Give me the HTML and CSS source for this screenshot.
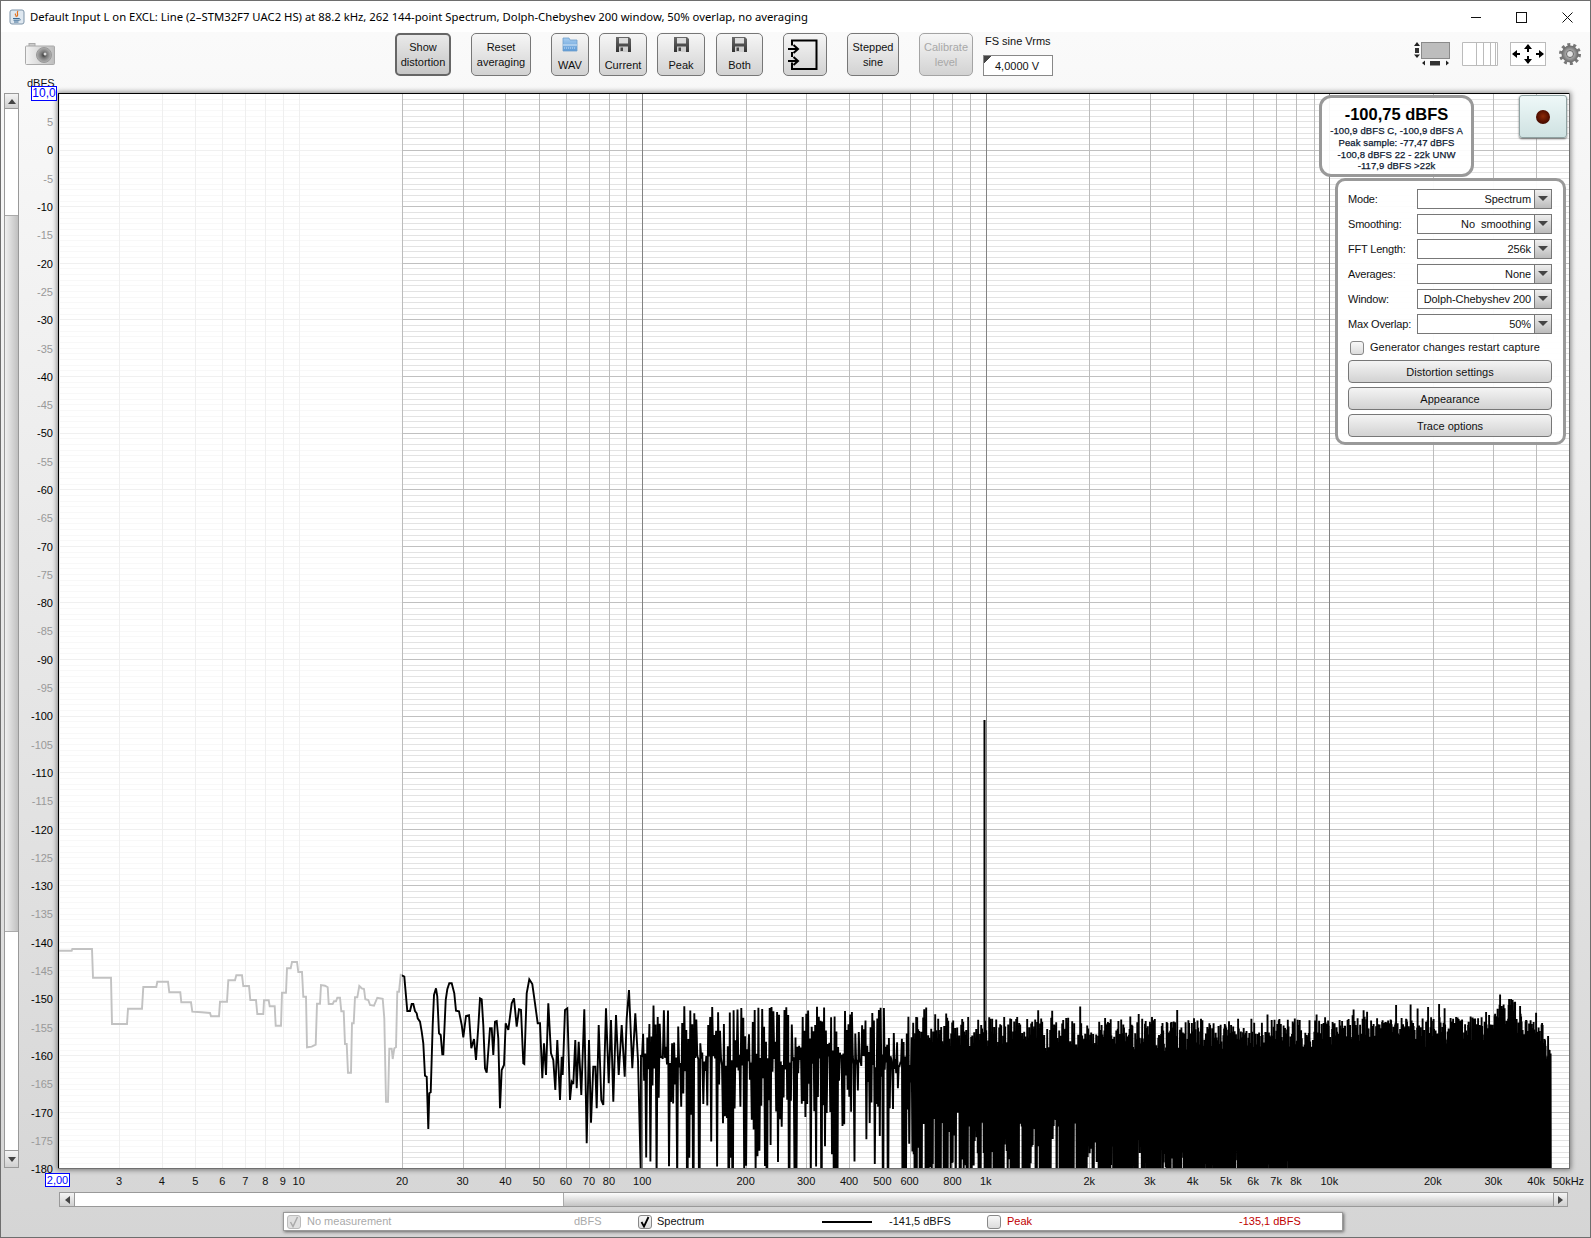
FILE: index.html
```html
<!DOCTYPE html>
<html lang="en">
<head>
<meta charset="utf-8">
<title>REW RTA</title>
<link rel="stylesheet" href="styles.css">
</head>
<body>
<svg class="defs" width="0" height="0" aria-hidden="true">
  <defs>
    <linearGradient id="flop" x1="0" y1="0" x2="0" y2="1"><stop offset="0" stop-color="#6a6a6a"/><stop offset="1" stop-color="#333"/></linearGradient>
    <symbol id="floppy" viewBox="0 0 15 15">
      <path d="M0 0H13L15 2V15H0Z" fill="url(#flop)"/>
      <rect x="3" y="1" width="9" height="5.500" fill="#dcdcdc"/>
      <rect x="3" y="9.500" width="9" height="5.500" fill="#cfcfcf"/>
      <rect x="4.500" y="10.500" width="2.500" height="3.500" fill="#444"/>
    </symbol>
  </defs>
</svg>
<div class="window">
  <header class="titlebar">
    <svg class="appicon" width="16" height="16" viewBox="0 0 16 16">
      <rect x="1" y="1" width="14" height="14" rx="2" fill="#dfe8f0" stroke="#7d93a8"/>
      <path d="M9 2C7 4 10 5 8 7.500M6.500 4.500C5.500 6 8 6.500 7 8" fill="none" stroke="#e2711d" stroke-width="1.200"/>
      <path d="M4 9.500H10.500M4.500 11.200H10M5 13H9.500" stroke="#3b6b94" fill="none"/>
      <path d="M10.500 9.500a1.300 1.300 0 0 1 0 2.200" stroke="#3b6b94" fill="none"/>
    </svg>
    <span class="title">Default Input L on EXCL: Line (2–STM32F7 UAC2 HS) at 88.2 kHz, 262 144-point Spectrum, Dolph-Chebyshev 200 window, 50% overlap, no averaging</span>
    <div class="winctl">
      <svg class="ctl" width="45" height="16" viewBox="0 0 45 16"><path d="M18 8.500H28" stroke="#111"/></svg>
      <svg class="ctl" width="45" height="16" viewBox="0 0 45 16"><rect x="17.500" y="3.500" width="10" height="10" fill="none" stroke="#111"/></svg>
      <svg width="45" height="16" viewBox="0 0 45 16"><path d="M17.500 3.500L27.500 13.500M27.500 3.500L17.500 13.500" stroke="#111" fill="none"/></svg>
    </div>
  </header>

  <div class="toolbar">
    <svg class="camera" width="30" height="22" viewBox="0 0 30 22">
      <defs>
        <linearGradient id="cam" x1="0" y1="0" x2="1" y2="0"><stop offset="0" stop-color="#f4f4f4"/><stop offset="1" stop-color="#bdbdbd"/></linearGradient>
        <radialGradient id="lens"><stop offset="0" stop-color="#333"/><stop offset=".4" stop-color="#777"/><stop offset="1" stop-color="#b4b4b4"/></radialGradient>
      </defs>
      <rect x="4" y="0.500" width="6" height="3" fill="#ccc" stroke="#aaa"/>
      <rect x="0.500" y="3" width="29" height="18.500" rx="1" fill="url(#cam)" stroke="#aaa"/>
      <circle cx="19" cy="12" r="7.500" fill="url(#lens)" stroke="#999"/>
      <circle cx="20" cy="11" r="1.500" fill="#ddd"/>
    </svg>
    <button class="btn btn-show">Show<br>distortion</button>
    <button class="btn btn-reset">Reset<br>averaging</button>
    <button class="btn btn-icon btn-wav">
      <svg width="16" height="15" viewBox="0 0 16 15">
        <defs><linearGradient id="fold" x1="0" y1="0" x2="0" y2="1"><stop offset="0" stop-color="#a7cdf0"/><stop offset="1" stop-color="#5d9ad6"/></linearGradient></defs>
        <path d="M1 1H7L8 3H15V14H1Z" fill="url(#fold)" stroke="#6f9fcc" stroke-width=".8"/>
        <path d="M1 8H15" stroke="#d7e8f8"/><path d="M2 11H14" stroke="#9ac2ea" stroke-dasharray="1 1" stroke-width="2"/>
      </svg>
      <span>WAV</span>
    </button>
    <button class="btn btn-icon btn-current"><svg width="15" height="15"><use href="#floppy"/></svg><span>Current</span></button>
    <button class="btn btn-icon btn-peak"><svg width="15" height="15"><use href="#floppy"/></svg><span>Peak</span></button>
    <button class="btn btn-icon btn-both"><svg width="15" height="15"><use href="#floppy"/></svg><span>Both</span></button>
    <button class="btn btn-import">
      <svg width="30" height="32" viewBox="0 0 30 32">
        <path d="M4 6.500V1.500H28.500V30H4V23.500M4 18V13" fill="none" stroke="#000" stroke-width="2"/>
        <path d="M0 10H9M5.500 6L10 10L5.500 14M0 22H9M5.500 18L10 22L5.500 26" fill="none" stroke="#000" stroke-width="2"/>
      </svg>
    </button>
    <button class="btn btn-stepped">Stepped<br>sine</button>
    <button class="btn btn-cal" disabled>Calibrate<br>level</button>
    <div class="fsgroup">
      <div class="fslabel">FS sine Vrms</div>
      <div class="fsinput">4,0000 V</div>
    </div>
    <div class="tools">
      <svg width="37" height="24" viewBox="0 0 37 24">
        <rect x="8.500" y="0.500" width="28" height="16" fill="#bdbdbd" stroke="#8a8a8a"/>
        <rect x="2" y="6" width="4" height="5" fill="#333"/>
        <path d="M4 0L7 4H1ZM4 16L7 12.500H1Z" fill="#222"/>
        <rect x="17" y="19" width="10" height="4.500" fill="#333"/>
        <path d="M9 21L12 18.500V23.500ZM36 21L33 18.500V23.500Z" fill="#222"/>
      </svg>
      <svg width="36" height="24" viewBox="0 0 36 24">
        <path d="M.5.500H35.500V23.500H.5ZM14.500.5V23.500M21.500.5V23.500M28.500.5V23.500M33.500.5V23.500" fill="#fff" stroke="#bbb"/>
      </svg>
      <svg width="36" height="24" viewBox="0 0 36 24">
        <rect x=".5" y=".5" width="35" height="23" fill="#fff" stroke="#bbb"/>
        <path d="M18 3V10M18 14V21M3 12H10M26 12H33" stroke="#000" stroke-width="2" fill="none"/>
        <path d="M18 2L22 7H14ZM18 22L22 17H14ZM2 12L7 8V16ZM34 12L29 8V16Z" fill="#000"/>
      </svg>
      <svg width="24" height="24" viewBox="0 0 24 24">
        <defs><radialGradient id="gear"><stop offset=".35" stop-color="#b8b8b8"/><stop offset="1" stop-color="#666"/></radialGradient></defs>
        <circle cx="12" cy="12" r="9.500" fill="none" stroke="#777" stroke-width="3" stroke-dasharray="2.985 2.985"/>
        <circle cx="12" cy="12" r="8.500" fill="url(#gear)"/>
        <circle cx="12" cy="12" r="3.500" fill="#e4e4e4" stroke="#666"/>
      </svg>
    </div>
  </div>

  <div class="main">
    <div class="dbfs-label">dBFS</div>
    <div class="top-value">10,0</div>
    <div class="vscroll">
      <div class="sbtn"><i class="tri tri-up"></i></div>
      <div class="vtrack"><div class="vthumb"></div></div>
      <div class="sbtn sbtn-down"><i class="tri tri-down"></i></div>
    </div>
    <div class="yaxis" id="yaxis"></div>
    <div class="plot">
      <svg id="chart" class="chart" width="1512" height="1076" viewBox="58 93 1512 1076"></svg>
      <div class="info">
        <div class="info-main">-100,75 dBFS</div>
        <div class="info-line">-100,9 dBFS C, -100,9 dBFS A</div>
        <div class="info-line">Peak sample: -77,47 dBFS</div>
        <div class="info-line">-100,8 dBFS 22 - 22k UNW</div>
        <div class="info-line">-117,9 dBFS &gt;22k</div>
      </div>
      <div class="record"><i class="led"></i></div>
      <div class="panel">
        <div class="row"><span>Mode:</span><div class="combo"><span class="val">Spectrum</span><i class="arrow"></i></div></div>
        <div class="row"><span>Smoothing:</span><div class="combo"><span class="val">No&nbsp; smoothing</span><i class="arrow"></i></div></div>
        <div class="row"><span>FFT Length:</span><div class="combo"><span class="val">256k</span><i class="arrow"></i></div></div>
        <div class="row"><span>Averages:</span><div class="combo"><span class="val">None</span><i class="arrow"></i></div></div>
        <div class="row"><span>Window:</span><div class="combo"><span class="val">Dolph-Chebyshev 200</span><i class="arrow"></i></div></div>
        <div class="row"><span>Max Overlap:</span><div class="combo"><span class="val">50%</span><i class="arrow"></i></div></div>
        <div class="restart"><i class="chk"></i><span>Generator changes restart capture</span></div>
        <button class="wide wide-first">Distortion settings</button>
        <button class="wide">Appearance</button>
        <button class="wide">Trace options</button>
      </div>
    </div>
  </div>

  <div class="xaxis" id="xaxis"><div class="left-value">2,00</div></div>

  <div class="hscroll">
    <div class="hbtn"><i class="tri tri-left"></i></div>
    <div class="htrack"></div>
    <div class="hthumb"></div>
    <div class="hbtn hbtn-end"><i class="tri tri-right"></i></div>
  </div>

  <div class="legend">
    <i class="chk chk-off"><svg width="12" height="12" viewBox="0 0 12 12"><path d="M2.500 6L5 10.500L9.500 1" fill="none" stroke="#aaa" stroke-width="1.500"/></svg></i>
    <span class="muted">No measurement</span>
    <span class="muted">dBFS</span>
    <i class="chk"><svg width="12" height="12" viewBox="0 0 12 12"><path d="M2.500 6L5 10.500L9.500 1" fill="none" stroke="#000" stroke-width="1.800"/></svg></i>
    <span>Spectrum</span>
    <i class="legend-line"></i>
    <span>-141,5 dBFS</span>
    <i class="chk"></i>
    <span class="red">Peak</span>
    <span class="red">-135,1 dBFS</span>
  </div>
</div>
<script src="script.js"></script>
</body>
</html>
```

FILE: styles.css
```css
* { box-sizing: border-box; }
html, body { margin: 0; padding: 0; }
body { font: 11px/1.2 "Liberation Sans", Arial, sans-serif; color: #111; }
.defs { position: absolute; }
i { display: block; }

.window {
  width: 1591px; height: 1238px; overflow: hidden;
  display: flex; flex-direction: column;
  border: 1px solid #6e6e6e;
  background: linear-gradient(#fbfbfb 0, #f8f8f8 8%, #d5d5d5 100%);
}
.titlebar { height: 31px; flex: none; background: #fff; display: flex; align-items: center; padding-left: 8px; }
.appicon { flex: none; }
.title { margin: -1px 0 0 5px; font: 11.300px "Noto Sans", sans-serif; white-space: nowrap; color: #000; }
.winctl { margin-left: auto; display: flex; }
.ctl { margin-right: 1px; }

.toolbar { height: 57px; flex: none; display: flex; align-items: flex-start; padding-top: 1px; }
.camera { margin: 10px 0 0 24px; }
.btn {
  height: 43px; padding: 0; flex: none; font: 11px/15px "Liberation Sans", Arial, sans-serif; color: #111; text-align: center;
  border: 1px solid #777; border-radius: 5px;
  background: linear-gradient(#f6f6f6, #d2d2d2);
}
.btn-show { width: 56px; margin-left: 340px; border: 2px solid #666; background: linear-gradient(#e9e9e9, #c6c6c6); }
.btn-reset { width: 60px; margin-left: 20px; }
.btn-icon { display: flex; flex-direction: column; align-items: center; justify-content: flex-start; padding-top: 3px; }
.btn-icon span { margin-top: 6px; }
.btn-wav { width: 38px; margin-left: 20px; }
.btn-current { width: 48px; margin-left: 10px; }
.btn-peak { width: 48px; margin-left: 10px; }
.btn-both { width: 47px; margin-left: 11px; }
.btn-import { width: 44px; margin-left: 20px; display: flex; align-items: center; padding-left: 4px; }
.btn-stepped { width: 52px; margin-left: 20px; }
.btn-cal { width: 54px; margin-left: 20px; color: #a8a8a8; border-color: #a4a4a4; }
.fsgroup { width: 70px; margin-left: 10px; flex: none; }
.fslabel { height: 16px; line-height: 16px; margin-left: 2px; }
.fsinput {
  height: 21px; margin-top: 6px; padding-left: 11px; line-height: 20px;
  background: linear-gradient(135deg, #444 5px, #fff 5.500px); background-color: #fff;
  border: 1px solid #888;
}
.tools { display: flex; gap: 12px; margin: 9px 0 0 360px; flex: none; }

.main { height: 1081px; flex: none; display: flex; align-items: flex-start; position: relative; }
.dbfs-label { position: absolute; left: 26px; top: -12px; }
.top-value {
  position: absolute; left: 30px; top: -3px; width: 26px; height: 15px; z-index: 2;
  border: 1px solid #00f; background: #fff; color: #00f; font-size: 12px; line-height: 13px; text-align: center;
}
.vscroll {
  width: 15px; height: 1075px; margin: 4px 0 0 3px; flex: none;
  display: flex; flex-direction: column; border: 1px solid #999; background: #fff;
}
.sbtn { height: 15px; flex: none; display: flex; align-items: center; justify-content: center; background: linear-gradient(#f4f4f4, #d0d0d0); border-bottom: 1px solid #999; }
.sbtn-down { height: 17px; border-bottom: 0; border-top: 1px solid #999; }
.vtrack { flex: 1; }
.vthumb { height: 717px; margin-top: 106px; background: linear-gradient(90deg, #f0f0f0, #c0c0c0); border-top: 1px solid #aaa; border-bottom: 1px solid #aaa; }
.tri { width: 0; height: 0; border: 4px solid transparent; }
.tri-up { border-bottom: 5px solid #444; border-top: 0; }
.tri-down { border-top: 5px solid #444; border-bottom: 0; }
.tri-left { border-right: 5px solid #444; border-left: 0; }
.tri-right { border-left: 5px solid #444; border-right: 0; }
.yaxis { width: 34px; margin: 19.150px 5px 0 0; flex: none; }
.ytick { height: 28.310px; line-height: 28.310px; text-align: right; color: #000; }
.ytick-minor { color: #999; }

.plot { width: 1512px; height: 1076px; margin-top: 4px; flex: none; position: relative; background: #fff; box-shadow: 0 0 5px 1px rgba(0,0,0,.45); }
.chart { display: block; }
.info {
  position: absolute; left: 1261px; top: 2px; width: 155px; height: 82px; padding-top: 6px; text-align: center;
  border: 3px solid #999; border-radius: 12px; background: rgba(255,255,255,.93);
}
.info-main { font-size: 16.500px; font-weight: bold; line-height: 20px; margin-bottom: 1px; color: #000; }
.info-line { font-size: 9.500px; line-height: 11.800px; color: #0c1830; letter-spacing: .1px; -webkit-text-stroke: .25px #0c1830; }
.record {
  position: absolute; left: 1461px; top: 2px; width: 48px; height: 43px; display: flex; align-items: center; justify-content: center;
  border: 1px solid #8fa2a2; border-radius: 3px; background: linear-gradient(#eef8f8, #cfe2e2);
  box-shadow: 0 1px 2px #666;
}
.led { width: 14px; height: 14px; border-radius: 50%; background: radial-gradient(circle at 50% 45%, #8c2a08, #561000 55%, #2e0800 100%); }
.panel {
  position: absolute; left: 1277px; top: 85px; width: 231px; height: 267px; padding: 8px 11px 0 10px;
  border: 3px solid #999; border-radius: 10px; background: rgba(255,255,255,.95);
}
.row { display: flex; align-items: center; justify-content: space-between; height: 20px; margin-bottom: 5px; white-space: nowrap; }
.row > span { padding-top: 1px; letter-spacing: -.2px; }
.combo { width: 135px; height: 20px; flex: none; display: flex; border: 1px solid #777; background: #fff; }
.val { flex: 1; text-align: right; padding-right: 3px; line-height: 18px; letter-spacing: -.08px; }
.arrow { width: 17px; flex: none; position: relative; background: linear-gradient(#eee, #bbb); border-left: 1px solid #777; }
.arrow::after { content: ""; position: absolute; left: 3px; top: 6px; border: 5px solid transparent; border-top: 5px solid #444; border-bottom: 0; }
.restart { display: flex; align-items: center; height: 14px; margin: 7px 0 0 2px; }
.restart span { margin-left: 6px; letter-spacing: .05px; }
.chk {
  width: 14px; height: 14px; flex: none; border: 1px solid #888; border-radius: 3px;
  background: linear-gradient(#f8f8f8, #dcdcdc); display: flex; align-items: center; justify-content: center;
}
.wide {
  display: block; width: 204px; height: 23px; padding: 0; margin-top: 4px;
  font: 11px "Liberation Sans", Arial, sans-serif; color: #111;
  border: 1px solid #777; border-radius: 4px; background: linear-gradient(#f4f4f4, #d2d2d2);
}
.wide-first { margin-top: 5px; }

.xaxis { height: 22px; flex: none; position: relative; }
.xtick { position: absolute; top: 0; line-height: 22px; transform: translateX(-50%); white-space: nowrap; }
.left-value {
  position: absolute; left: 44px; top: 3px; width: 25px; height: 14px;
  border: 1px solid #00f; background: #fff; color: #00f; font-size: 11px; line-height: 13px; text-align: center;
}
.hscroll { height: 15px; width: 1509px; margin-left: 58px; flex: none; display: flex; border: 1px solid #999; }
.hbtn { width: 15px; flex: none; display: flex; align-items: center; justify-content: center; background: linear-gradient(#f4f4f4, #d0d0d0); border-right: 1px solid #999; }
.hbtn-end { border-right: 0; border-left: 1px solid #999; width: 14px; }
.htrack { width: 488px; flex: none; background: #fff; }
.hthumb { flex: 1; background: linear-gradient(#fdfdfd, #c4c4c4); border-left: 1px solid #aaa; }

.legend {
  width: 1060px; height: 19px; margin: 5px 0 0 282px; flex: none; padding-left: 3px;
  display: grid; align-items: center;
  grid-template-columns: 20px 267px 64px 19px 165px 67px 98px 20px 232px 1fr;
  background: #fff; border: 1px solid #999; box-shadow: 1px 1px 3px #666;
}
.legend .chk { height: 14px; }
.chk-off { background: #e0e0e0; border-color: #bbb; }
.muted { color: #aaa; }
.red { color: #c00000; }
.legend-line { width: 50px; height: 2px; background: #000; }
```

FILE: script.js
```js
(function () {
  var NS = 'http://www.w3.org/2000/svg';
  var L = 59, R = 1570, T = 93.5, B = 1169;
  function fx(f) { return L + (R - L) * Math.log10(f / 2) / Math.log10(25000); }
  function dy(db) { return T + (10 - db) * (B - T) / 190; }

  var svg = document.getElementById('chart');
  function path(d, attrs) {
    var p = document.createElementNS(NS, 'path');
    p.setAttribute('d', d); p.setAttribute('fill', 'none');
    for (var k in attrs) p.setAttribute(k, attrs[k]);
    svg.appendChild(p); return p;
  }

  /* y labels */
  var ya = document.getElementById('yaxis');
  for (var v = 5; v >= -180; v -= 5) {
    var d = document.createElement('div');
    d.className = 'ytick' + (v % 10 ? ' ytick-minor' : '');
    d.textContent = String(v);
    ya.appendChild(d);
  }

  /* x labels */
  var xa = document.getElementById('xaxis');
  function fmt(f) { return f >= 1000 ? (f / 1000) + 'k' : String(f); }
  var fs = [3, 4, 5, 6, 7, 8, 9, 10, 20, 30, 40, 50, 60, 70, 80, 100, 200, 300, 400, 500, 600, 800, 1000,
    2000, 3000, 4000, 5000, 6000, 7000, 8000, 10000, 20000, 30000, 40000];
  fs.forEach(function (f) {
    var s = document.createElement('span');
    s.className = 'xtick';
    s.textContent = fmt(f);
    s.style.left = (fx(f) - 1.5) + 'px';
    xa.appendChild(s);
  });
  var last = document.createElement('span');
  last.className = 'xtick';
  last.textContent = '50kHz';
  last.style.left = '1567.5px';
  xa.appendChild(last);

  /* grid */
  var minor = '', major = '';
  for (var db = 10; db >= -180; db--) {
    var y = Math.floor(dy(db)) + 0.5;
    if (db % 10 === 0) major += 'M58 ' + y + 'H1570'; else minor += 'M58 ' + y + 'H1570';
  }
  path(minor, { stroke: '#e3e3e3', 'shape-rendering': 'crispEdges' });
  path(major, { stroke: '#c0c0c0', 'shape-rendering': 'crispEdges' });
  var vert = '', vmaj = '';
  [1, 10, 100, 1000, 10000].forEach(function (m) {
    [2, 3, 4, 5, 6, 7, 8, 9, 10].forEach(function (k) {
      var f = k * m;
      if (f < 2 || f > 50000) return;
      var x = Math.floor(fx(f)) + 0.5;
      if (f === 100 || f === 1000 || f === 10000) vmaj += 'M' + x + ' 93V1169';
      else vert += 'M' + x + ' 93V1169';
    });
  });
  path(vert, { stroke: '#bcbcbc', 'shape-rendering': 'crispEdges' });
  path(vmaj, { stroke: '#828282', 'shape-rendering': 'crispEdges' });

  /* digitised low-frequency trace: [px, py] of two crops at 3x */
  var a = [25,62,65,62,67,57,126,57,129,143,183,143,186,282,231,282,234,236,276,236,280,171,319,171,322,155,354,155,358,187,391,187,394,217,423,217,427,245,455,247,480,249,483,259,507,259,510,215,531,215,535,151,555,151,559,136,576,136,580,168,597,168,601,210,618,210,622,252,640,252,642,211,656,211,659,229,674,229,677,287,693,287,696,188,708,188,711,115,722,115,726,96,741,96,745,126,756,126,760,200,768,200,771,352,785,350,797,344,801,221,810,221,813,165,825,167,833,172,836,222,848,222,852,214,858,214,862,203,870,203,874,244,881,244,885,342,890,342,894,428,903,428,906,280,911,280,915,202,922,202,928,168,935,175,942,177,946,208,955,210,960,225,972,227,982,203,998,206,1003,265,1008,515,1014,515,1018,356,1025,356,1028,387,1033,355,1038,352,1042,185,1047,185,1052,135,1057,137,1063,140,1067,188,1072,243,1080,243,1085,222,1090,222,1095,243,1100,250,1103,265,1110,275,1115,305,1120,340,1125,437,1130,440,1135,597,1138,490,1142,487,1148,285,1152,195,1158,175,1162,200,1167,310,1172,315,1177,373,1180,373,1187,210,1192,178,1198,160];
  var b = [35,70,43,100,48,152,57,154,65,195,70,232,78,168,87,166,94,265,102,237,108,300,115,200,120,115,125,118,130,195,135,325,140,338,150,205,155,205,160,285,165,185,170,183,175,235,180,445,185,330,192,315,197,190,205,210,215,130,222,115,230,200,237,148,243,150,250,310,253,312,260,100,268,58,277,72,285,130,293,190,300,190,307,355,312,250,318,345,325,130,333,280,340,300,346,390,352,240,360,420,365,290,368,345,375,150,382,145,390,420,395,365,400,372,406,240,410,385,416,245,424,405,433,148,440,550,447,240,453,488,460,320,466,320,470,445,476,195,484,420,490,435,498,145,506,370,513,180,520,425,528,165,536,345,545,195,554,350,560,175,567,90,577,325,586,160,594,300,602,630];
  var td = '', i;
  for (i = 0; i < a.length; i += 2) td += (i ? 'L' : 'M') + (50 + a[i] / 3).toFixed(1) + ' ' + (930 + a[i + 1] / 3).toFixed(1);
  for (i = 0; i < b.length; i += 2) td += 'L' + (440 + b[i] / 3).toFixed(1) + ' ' + (960 + b[i + 1] / 3).toFixed(1);

  /* seeded noise for the dense part above ~100 Hz */
  var seed = 20240611;
  function rnd() {
    seed = (seed + 0x6D2B79F5) | 0;
    var t = Math.imul(seed ^ (seed >>> 15), 1 | seed);
    t = (t + Math.imul(t ^ (t >>> 7), 61 | t)) ^ t;
    return ((t ^ (t >>> 14)) >>> 0) / 4294967296;
  }
  function lerp(tbl, x) {
    for (var j = 1; j < tbl.length; j++) {
      if (x <= tbl[j][0]) {
        var p = tbl[j - 1], q = tbl[j];
        return p[1] + (q[1] - p[1]) * (x - p[0]) / (q[0] - p[0]);
      }
    }
    return tbl[tbl.length - 1][1];
  }
  var env = [[640, -149.5], [900, -150.5], [1300, -151], [1480, -150.5], [1513, -147], [1522, -150.5], [1542, -151.5], [1551, -157]];
  var x = 641, nd = '';
  while (x < 1551) {
    var step = x < 913 ? 2.1 - 0.5 * (x - 640) / 273 : x < 1100 ? 1 : x < 1315 ? 0.7 : 0.5;
    var drop;
    if (x < 913) drop = 1 + Math.pow(rnd(), 1.2) * 11;
    else drop = rnd() < 0.03 ? rnd() * 2.5 : 2.5 + rnd() * 6;
    var top = lerp(env, x) - drop;
    var bot;
    if (x < 913) {
      var r = rnd();
      bot = r < 0.07 ? -195 : -160 - Math.pow(rnd(), 1.5) * 23;
    } else if (x < 1100) {
      var s = lerp([[913, -167], [1100, -172]], x);
      bot = s - Math.pow(rnd(), 1.3) * 26;
    } else if (x < 1320) {
      var s2 = lerp([[1100, -172], [1320, -178]], x);
      bot = s2 - rnd() * 20;
    } else {
      bot = -195;
    }
    nd += 'L' + x.toFixed(1) + ' ' + dy(top).toFixed(1) + 'L' + (x + step / 2).toFixed(1) + ' ' + dy(bot).toFixed(1);
    x += step;
  }
  path(td + nd, { stroke: '#000', 'stroke-width': 1.9, 'stroke-linejoin': 'miter', 'stroke-miterlimit': 3 });
  path('M984.500 720V1040', { stroke: '#000', 'stroke-width': 2 });

  /* the region below 20 Hz is washed out */
  var wash = document.createElementNS(NS, 'rect');
  wash.setAttribute('x', 59); wash.setAttribute('y', 94);
  wash.setAttribute('width', 343); wash.setAttribute('height', 1075);
  wash.setAttribute('fill', '#fff'); wash.setAttribute('fill-opacity', '0.76');
  svg.appendChild(wash);

  /* frame */
  path('M58.500 1169V93.500H1570', { stroke: '#000', 'shape-rendering': 'crispEdges' });
  path('M58 1168.500H1569.500V93', { stroke: '#707070', 'shape-rendering': 'crispEdges' });
})();
```
